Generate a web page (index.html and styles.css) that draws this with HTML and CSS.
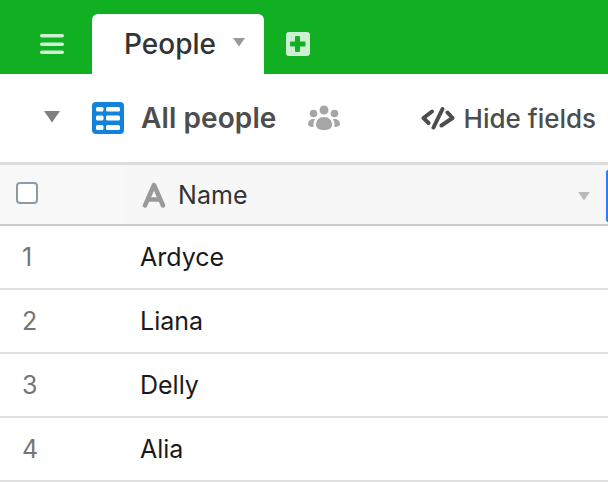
FILE: index.html
```html
<!DOCTYPE html>
<html lang="en">
<head>
<meta charset="utf-8">
<title>People</title>
<link rel="stylesheet" href="styles.css">
</head>
<body>
<header class="appbar">
  <svg class="menu" width="26" height="22" viewBox="0 0 26 22"><rect x="1" y="2" width="24" height="3.500" rx="1.750"/><rect x="1" y="10.500" width="24" height="3.500" rx="1.750"/><rect x="1" y="18.500" width="24" height="3.500" rx="1.750"/></svg>
  <div class="tab"><span class="tab-name">People</span><svg class="caret" width="14" height="10" viewBox="0 0 14 10"><path d="M1 1h12L7 9.500z"/></svg></div>
  <svg class="add" width="26" height="26" viewBox="0 0 26 26"><path fill-rule="evenodd" d="M4 1h18a3 3 0 0 1 3 3v18a3 3 0 0 1-3 3H4a3 3 0 0 1-3-3V4a3 3 0 0 1 3-3zM10 6v4.500H6a1 1 0 0 0-1 1v3a1 1 0 0 0 1 1h4V20a1 1 0 0 0 1 1h3a1 1 0 0 0 1-1v-4.500h4.500a1 1 0 0 0 1-1v-3a1 1 0 0 0-1-1H15V6a1 1 0 0 0-1-1h-3a1 1 0 0 0-1 1z"/></svg>
</header>
<section class="toolbar">
  <svg class="view-caret" width="18" height="13" viewBox="0 0 18 13"><path d="M1 1h16L9 12.500z"/></svg>
  <svg class="grid-icon" width="32" height="32" viewBox="0 0 32 32"><rect width="32" height="32" rx="4" fill="#1283da"/><g fill="#fff"><rect x="4" y="5" width="7.500" height="4.500" rx="1.500"/><rect x="14" y="5" width="14" height="4.500" rx="1.500"/><rect x="4" y="13.500" width="7.500" height="5" rx="1.500"/><rect x="14" y="13.500" width="14" height="5" rx="1.500"/><rect x="4" y="23" width="7.500" height="5" rx="1.500"/><rect x="14" y="23" width="14" height="5" rx="1.500"/></g></svg>
  <span class="view-name">All people</span>
  <svg class="people-icon" width="32" height="26" viewBox="0 0 32 26"><g fill="#a6a6a6"><circle cx="16" cy="5" r="4.500"/><circle cx="5.500" cy="8.500" r="3.800"/><circle cx="26.500" cy="8.500" r="3.800"/><path d="M8 20c0-5 3-8 8-8s8 3 8 8c0 3-3 5-8 5s-8-2-8-5z"/><path d="M5.500 14C2.500 14 0 16 0 19c0 1.500 1.500 3 5.500 3-.3-3 .2-5.500 1.700-7.800-.5-.1-1.200-.2-1.700-.2z"/><path d="M26.500 14c3 0 5.500 2 5.500 5 0 1.500-1.500 3-5.500 3 .3-3-.2-5.500-1.700-7.800 .5-.1 1.200-.2 1.700-.2z"/></g></svg>
  <svg class="hide-icon" width="34" height="24" viewBox="0 0 34 24"><g fill="none" stroke="#4d4d4d" stroke-width="4" stroke-linecap="round" stroke-linejoin="round"><path d="M11 5.500 2.500 12 7.500 17"/><path d="M26.500 6.500 31.500 12 20.500 19.500"/><path d="M21.500 3 12.500 21.500"/></g></svg>
  <span class="hide-label">Hide fields</span>
</section>
<main class="table">
  <div class="head-row">
    <div class="head-num"><span class="checkbox"></span></div>
    <div class="head-name">
      <svg class="type-icon" width="26" height="26" viewBox="0 0 26 26"><path fill="none" stroke="#999" stroke-width="4.500" stroke-linecap="round" stroke-linejoin="round" d="M5 23.500 14 3l9 20.500M8 17.500h12"/></svg>
      <span class="head-label">Name</span>
      <svg class="head-caret" width="14" height="10" viewBox="0 0 14 10"><path d="M1 1h12L7 9.500z"/></svg>
      <span class="resize-handle"></span>
    </div>
  </div>
  <div class="row"><span class="num">1</span><span class="cell">Ardyce</span></div>
  <div class="row"><span class="num">2</span><span class="cell">Liana</span></div>
  <div class="row"><span class="num">3</span><span class="cell">Delly</span></div>
  <div class="row"><span class="num">4</span><span class="cell">Alia</span></div>
</main>
</body>
</html>
```
FILE: styles.css
```css
* { box-sizing: border-box; }
html, body { margin: 0; padding: 0; }
body {
  width: 608px;
  height: 484px;
  overflow: hidden;
  background: #fff;
  font-family: Inter, "Liberation Sans", sans-serif;
  color: #333;
}
.appbar {
  height: 74px;
  background: #11af22;
  display: flex;
  align-items: flex-end;
}
.menu { fill: #cfefd3; margin: 0 0 20px 39px; flex: none; }
.tab {
  width: 172px;
  height: 60px;
  margin-left: 27px;
  background: #fff;
  border-radius: 6px 6px 0 0;
  display: flex;
  align-items: flex-start;
  padding: 13px 0 0 32px;
}
.tab-name { font-size: 28px; font-weight: 500; line-height: 34px; color: #333; }
.caret { fill: #999; margin: 10px 0 0 16px; }
.add { fill: #cfefd3; margin: 0 0 17px 21px; }
.toolbar {
  height: 88px;
  display: flex;
  align-items: center;
  white-space: nowrap;
  overflow: hidden;
}
.view-caret { fill: #808080; margin-left: 43px; margin-top: -4px; flex: none; }
.grid-icon { margin-left: 31px; flex: none; }
.view-name { font-size: 28px; font-weight: 600; color: #4d4d4d; margin-left: 17px; letter-spacing: 0.1px; }
.people-icon { margin-left: 31px; flex: none; }
.hide-icon { margin-left: 81px; flex: none; }
.hide-label { font-size: 26px; font-weight: 500; color: #4d4d4d; margin-left: 9px; }
.table { border-top: 3px solid #ddd; }
.head-row {
  height: 61px;
  display: flex;
  background: #f7f7f7;
  border-bottom: 2px solid #ccc;
}
.head-num { width: 126px; display: flex; align-items: center; padding: 0 0 4px 16px; background: #f8f8f8; }
.checkbox {
  width: 22px;
  height: 22px;
  border: 2px solid #8f9aa5;
  border-radius: 4px;
  background: #fff;
}
.head-name {
  flex: 1;
  display: flex;
  align-items: center;
  padding-left: 14px;
}
.type-icon { flex: none; }
.head-label { font-size: 25px; color: #333; margin-left: 12px; letter-spacing: 0.05px; }
.head-caret { fill: #bbb; margin-left: auto; margin-right: 15px; margin-top: 3px; }
.resize-handle {
  width: 2px;
  height: 52px;
  margin-top: 3px;
  background: #2d7ff9;
  border-radius: 2px 0 0 2px;
}
.row {
  height: 64px;
  display: flex;
  align-items: center;
  border-bottom: 2px solid #dde1e5;
}
.num { width: 140px; padding-left: 22px; font-size: 25px; color: #757575; }
.cell { font-size: 25px; color: #1a1a1a; }
```
